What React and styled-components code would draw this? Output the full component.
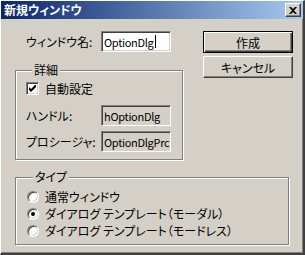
import styled, { createGlobalStyle } from 'styled-components';

const GlobalStyle = createGlobalStyle`
  html, body {
    margin: 0;
    padding: 0;
    background: #d4d0c8;
  }
  body {
    font-family: "Noto Sans CJK JP", "Noto Sans", sans-serif;
    font-size: 12px;
    font-feature-settings: "palt";
    color: #000;
  }
`;

const Window = styled.div`
  width: 305px;
  height: 255px;
  box-sizing: border-box;
  background: #d4d0c8;
  border-top: 1px solid #ffffff;
  border-left: 1px solid #ffffff;
  border-right: 2px solid #404040;
  border-bottom: 2px solid #404040;
  box-shadow: inset -1px -1px #808080;
  display: flex;
  flex-direction: column;
`;

const TitleBar = styled.div`
  height: 18px;
  display: flex;
  align-items: center;
  padding: 0 2px 0 3px;
  background: linear-gradient(to right, #0a246a, #a6caf0);
  color: #fff;
  font-weight: bold;
  line-height: 18px;
`;

const TitleText = styled.span`
  flex: 1;
`;

const CloseButton = styled.div`
  width: 16px;
  height: 14px;
  box-sizing: border-box;
  background: #d4d0c8;
  border: 1px solid;
  border-color: #ffffff #404040 #404040 #ffffff;
  box-shadow: inset -1px -1px #808080;
  display: flex;
  align-items: center;
  justify-content: center;
`;

const Body = styled.div`
  padding: 12px 0 0 14px;
  display: flex;
  flex-direction: column;
`;

const Top = styled.div`
  display: flex;
`;

const LeftCol = styled.div`
  width: 168px;
  display: flex;
  flex-direction: column;
`;

const RightCol = styled.div`
  margin-left: 20px;
  width: 90px;
  display: flex;
  flex-direction: column;
  gap: 3px;
`;

const Row = styled.div`
  display: flex;
  align-items: center;
  height: ${(p) => p.h || 21}px;
  padding-left: ${(p) => p.indent || 0}px;
  margin-top: ${(p) => p.mt || 0}px;
  white-space: nowrap;
`;

const Label = styled.span`
  width: ${(p) => p.w}px;
  flex-shrink: 0;
  white-space: nowrap;
`;

const Field = styled.div`
  width: 70px;
  height: 21px;
  box-sizing: border-box;
  border: 1px solid;
  border-color: #808080 #ffffff #ffffff #808080;
  box-shadow: inset 1px 1px #404040, inset -1px -1px #d4d0c8;
  background: ${(p) => (p.readOnly ? '#d4d0c8' : '#ffffff')};
  padding: 0 1px 0 2px;
  display: flex;
  align-items: center;
  overflow: hidden;
  white-space: nowrap;
  font-size: 11px;
  letter-spacing: -0.3px;
`;

const Caret = styled.span`
  display: inline-block;
  width: 1px;
  height: 13px;
  background: #000;
  margin-left: 1px;
`;

const Button = styled.div`
  height: 22px;
  box-sizing: border-box;
  display: flex;
  align-items: center;
  justify-content: center;
  background: #d4d0c8;
  border: 1px solid;
  border-color: ${(p) => (p.primary ? '#000' : '#ffffff #404040 #404040 #ffffff')};
  box-shadow: ${(p) =>
    p.primary
      ? 'inset 1px 1px #ffffff, inset -1px -1px #404040, inset -2px -2px #808080'
      : 'inset -1px -1px #808080'};
`;

const Group = styled.fieldset`
  margin: ${(p) => p.mt}px 0 0 0;
  padding: ${(p) => p.pad};
  width: ${(p) => (p.w ? `${p.w}px` : 'auto')};
  box-sizing: border-box;
  border: 1px solid #808080;
  box-shadow: inset 1px 1px #ffffff, 1px 1px #ffffff;
  min-width: 0;
  display: flex;
  flex-direction: column;
`;

const Legend = styled.legend`
  margin-left: 6px;
  padding: 0 2px;
  background: #d4d0c8;
  line-height: 14px;
`;

const Check = styled.span`
  width: 13px;
  height: 13px;
  box-sizing: border-box;
  border: 1px solid;
  border-color: #808080 #ffffff #ffffff #808080;
  box-shadow: inset 1px 1px #404040, inset -1px -1px #d4d0c8;
  background: #fff;
  display: flex;
  align-items: center;
  justify-content: center;
  margin-right: 6px;
`;

const Radio = styled.span`
  width: 12px;
  height: 12px;
  box-sizing: border-box;
  border-radius: 50%;
  border: 1px solid;
  border-color: #808080 #ffffff #ffffff #808080;
  box-shadow: inset 1px 1px #404040, inset -1px -1px #d4d0c8;
  background: #fff;
  display: flex;
  align-items: center;
  justify-content: center;
  margin-right: 6px;
  &::after {
    content: '';
    width: 4px;
    height: 4px;
    border-radius: 50%;
    background: ${(p) => (p.checked ? '#000' : 'transparent')};
  }
`;

export default function App() {
  return (
    <>
      <GlobalStyle />
      <Window>
        <TitleBar>
          <TitleText>新規ウィンドウ</TitleText>
          <CloseButton>
            <svg width="8" height="7" viewBox="0 0 8 7">
              <path d="M0 0h2l2 2 2-2h2L5 3.5 8 7H6L4 5 2 7H0l3-3.5z" fill="#000" />
            </svg>
          </CloseButton>
        </TitleBar>
        <Body>
          <Top>
            <LeftCol>
              <Row indent={11}>
                <Label w={75}>ウィンドウ名:</Label>
                <Field>
                  OptionDlg
                  <Caret />
                </Field>
              </Row>
              <Group mt={11} pad="3px 10px 7px 10px">
                <Legend>詳細</Legend>
                <Row h={17}>
                  <Check>
                    <svg width="7" height="7" viewBox="0 0 7 7">
                      <path d="M0 2v3l2 2 5-5V-1L2 4z" fill="#000" />
                    </svg>
                  </Check>
                  自動設定
                </Row>
                <Row h={21} mt={8}>
                  <Label w={75}>ハンドル:</Label>
                  <Field readOnly>hOptionDlg</Field>
                </Row>
                <Row h={21} mt={5}>
                  <Label w={75}>プロシージャ:</Label>
                  <Field readOnly>OptionDlgPrc</Field>
                </Row>
              </Group>
            </LeftCol>
            <RightCol>
              <Button primary>作成</Button>
              <Button>キャンセル</Button>
            </RightCol>
          </Top>
          <Group mt={10} w={274} pad="4px 11px 5px 11px">
            <Legend>タイプ</Legend>
            <Row h={17}>
              <Radio />
              通常ウィンドウ
            </Row>
            <Row h={17}>
              <Radio checked />
              ダイアログ テンプレート（モーダル）
            </Row>
            <Row h={17}>
              <Radio />
              ダイアログ テンプレート（モードレス）
            </Row>
          </Group>
        </Body>
      </Window>
    </>
  );
}
